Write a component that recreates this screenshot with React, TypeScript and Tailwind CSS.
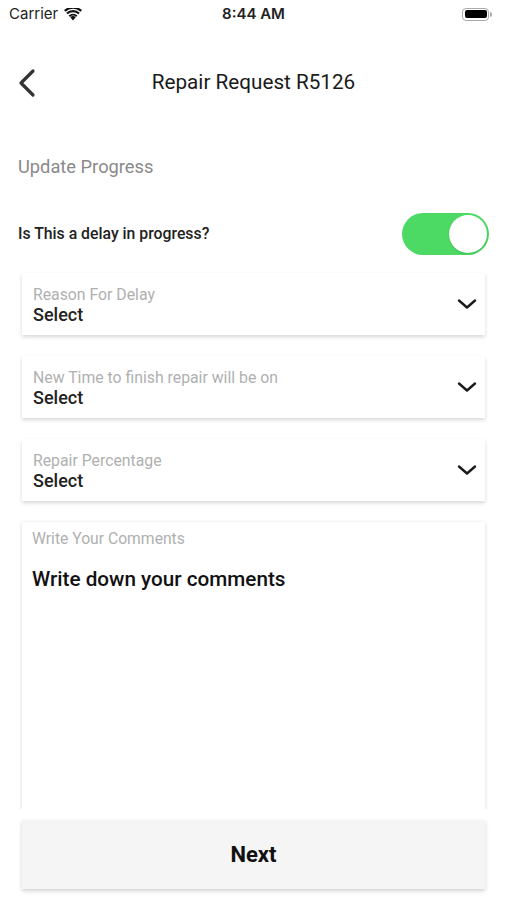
import React from "react";

function Chevron() {
  return (
    <svg width="20" height="12" viewBox="0 0 20 12" fill="none">
      <path d="M2 2.5L10 9.5L18 2.5" stroke="#1a1a1a" strokeWidth="2.4" strokeLinecap="round" strokeLinejoin="round" />
    </svg>
  );
}

function SelectCard({ label }: { label: string }) {
  return (
    <div className="mx-[22px] h-[62px] bg-white shadow-[0_2px_4px_rgba(0,0,0,0.16)] flex items-center justify-between pl-[11px] pr-[8px]">
      <div className="flex flex-col pt-[3px]">
        <span className="text-[15.8px] leading-[18px] text-[#b0b0b0]">{label}</span>
        <span className="text-[18px] leading-[22px] font-medium text-[#222]">Select</span>
      </div>
      <Chevron />
    </div>
  );
}

export default function App() {
  return (
    <div className="w-[507px] h-[900px] bg-white overflow-hidden relative" style={{ fontFamily: "Roboto, 'Liberation Sans', sans-serif" }}>
      {/* Status bar */}
      <div className="h-[28px] flex items-center justify-between px-[9px] relative" style={{ fontFamily: "Inter, 'Liberation Sans', sans-serif" }}>
        <div className="flex items-center gap-[6px]">
          <span className="text-[15px] text-[#222]">Carrier</span>
          <svg width="18" height="13" viewBox="0 0 18 13">
            <path d="M9 12.5L6.3 9.3a4 4 0 0 1 5.4 0z" fill="#111" />
            <path d="M4.6 7.4a6.6 6.6 0 0 1 8.8 0l-1.4 1.6a4.4 4.4 0 0 0-6 0z" fill="#111" />
            <path d="M2.2 4.7a10.2 10.2 0 0 1 13.6 0l-1.5 1.6a8 8 0 0 0-10.6 0z" fill="#111" />
            <path d="M0 2.1a13.5 13.5 0 0 1 18 0l-1.5 1.6a11.3 11.3 0 0 0-15 0z" fill="#111" />
          </svg>
        </div>
        <span className="absolute left-1/2 -translate-x-1/2 text-[15px] font-semibold text-[#222]">8:44 AM</span>
        <div className="flex items-center mr-[6px]">
          <div className="w-[27px] h-[13px] rounded-[4px] border border-[#aaa] p-[1.5px]">
            <div className="w-full h-full rounded-[2px] bg-black" />
          </div>
          <div className="w-[2px] h-[5px] bg-[#aaa] rounded-r-sm ml-[1px]" />
        </div>
      </div>

      {/* Header */}
      <div className="mt-[29px] h-[52px] flex items-center relative">
        <svg className="ml-[16px]" width="22" height="30" viewBox="0 0 22 30" fill="none">
          <path d="M17 3L5 15L17 27" stroke="#333" strokeWidth="3.2" strokeLinecap="round" strokeLinejoin="round" />
        </svg>
        <span className="absolute left-1/2 -translate-x-1/2 text-[20.7px] text-[#1a1a1a] whitespace-nowrap">Repair Request R5126</span>
      </div>

      {/* Update progress */}
      <div className="mt-[46px] px-[18px] text-[18.3px] leading-[24px] text-[#8a8a8a]">Update Progress</div>

      {/* Delay row */}
      <div className="mt-[34px] pl-[18px] pr-[18px] flex items-center justify-between h-[42px]">
        <span className="text-[15.8px] font-medium text-[#222]">Is This a delay in progress?</span>
        <div className="w-[87px] h-[42px] rounded-full bg-[#4cd964] flex items-center justify-end pr-[2px]">
          <div className="w-[38px] h-[38px] rounded-full bg-white shadow-[0_1px_2px_rgba(0,0,0,0.15)]" />
        </div>
      </div>

      {/* Cards */}
      <div className="mt-[18px] flex flex-col gap-[21px]">
        <SelectCard label="Reason For Delay" />
        <SelectCard label="New Time to finish repair will be on" />
        <SelectCard label="Repair Percentage" />
      </div>

      {/* Comments */}
      <div className="mt-[15px] h-[293px] overflow-hidden px-[16px] pt-[6px]">
        <div className="mx-[6px] h-[320px] bg-white shadow-[0_1px_4px_rgba(0,0,0,0.16)] px-[10px] pt-[7px]">
          <div className="text-[15.7px] leading-[20px] text-[#b0b0b0]">Write Your Comments</div>
          <div className="mt-[17px] text-[20.7px] leading-[26px] font-medium text-[#111]">Write down your comments</div>
        </div>
      </div>

      {/* Next button */}
      <div className="mt-[11px] mx-[22px] h-[69px] bg-[#f5f5f5] shadow-[0_2px_4px_rgba(0,0,0,0.18)] flex items-center justify-center">
        <span className="text-[22px] font-bold text-[#111]">Next</span>
      </div>
    </div>
  );
}
